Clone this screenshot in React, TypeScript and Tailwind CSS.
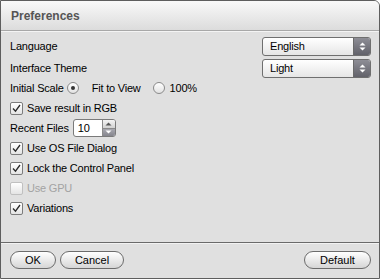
import React from "react";

const font = { fontFamily: '"Liberation Sans", Arial, sans-serif' };

function Arrows({ dark }: { dark?: boolean }) {
  const c = dark ? "#ffffff" : "#555555";
  return (
    <svg width="7" height="9" viewBox="0 0 7 9">
      <path d="M0.5 3.5 L3.5 0.5 L6.5 3.5 Z" fill={c} />
      <path d="M0.5 5.5 L3.5 8.5 L6.5 5.5 Z" fill={c} />
    </svg>
  );
}

function Select({ value }: { value: string }) {
  return (
    <div className="flex h-[19px] w-[109px] overflow-hidden rounded-[3px] border border-[#6f6f6f] bg-gradient-to-b from-white to-[#e6e6e6]">
      <div className="flex flex-1 items-center pl-[7px] text-[11px] text-black">{value}</div>
      <div className="flex w-[17px] items-center justify-center border-l border-[#6a6a6a] bg-gradient-to-b from-[#8e8e96] to-[#62626a]">
        <Arrows dark />
      </div>
    </div>
  );
}

function Checkbox({ label, checked, disabled }: { label: string; checked?: boolean; disabled?: boolean }) {
  return (
    <div className="flex h-[20px] items-center">
      <div
        className={
          "flex h-[13px] w-[13px] items-center justify-center rounded-[2px] border bg-gradient-to-b from-white to-[#e4e4e4] " +
          (disabled ? "border-[#c0c0c0]" : "border-[#7c7c7c]")
        }
      >
        {checked && (
          <svg width="9" height="9" viewBox="0 0 9 9">
            <path d="M1 4.5 L3.5 7.2 L8 1" fill="none" stroke="#2a2a2a" strokeWidth="1.3" />
          </svg>
        )}
      </div>
      <span className={"ml-[4px] text-[11px] tracking-[-0.2px] " + (disabled ? "text-[#a3a3a3]" : "text-black")}>
        {label}
      </span>
    </div>
  );
}

function Radio({ checked }: { checked?: boolean }) {
  return (
    <div className="flex h-[12px] w-[12px] items-center justify-center rounded-full border border-[#8a8a8a] bg-gradient-to-b from-white to-[#e2e2e2]">
      {checked && <div className="h-[4px] w-[4px] rounded-full bg-[#333]" />}
    </div>
  );
}

function Button({ label, w }: { label: string; w: string }) {
  return (
    <div
      className={
        "flex h-[18px] items-center justify-center rounded-full border border-[#6c6c6c] bg-gradient-to-b from-white to-[#d6d6d6] text-[11px] text-black " +
        w
      }
    >
      {label}
    </div>
  );
}

export default function App() {
  return (
    <div className="h-[279px] w-[382px] bg-white" style={font}>
      <div className="flex h-[279px] w-[380px] flex-col overflow-hidden rounded-tr-[6px] border border-[#5e5e5e] bg-[#e0e0e0]">
        {/* title */}
        <div className="flex h-[30px] items-center border-b border-[#a8a8a8] bg-gradient-to-b from-[#f9f9f9] to-[#dcdcdc] pl-[10px] shadow-[0_1px_0_#f4f4f4]">
          <span className="text-[12px] font-bold text-[#555555]">Preferences</span>
        </div>

        {/* settings */}
        <div className="flex flex-1 flex-col pl-[9px] pr-[8px] pt-[5px] text-[11px] tracking-[-0.2px] text-black">
          <div className="flex h-[20px] items-center justify-between">
            <span>Language</span>
            <Select value="English" />
          </div>
          <div className="mt-[2px] flex h-[20px] items-center justify-between">
            <span>Interface Theme</span>
            <Select value="Light" />
          </div>
          <div className="flex h-[20px] items-center">
            <span>Initial Scale</span>
            <div className="ml-[3px]">
              <Radio checked />
            </div>
            <span className="ml-[13px]">Fit to View</span>
            <div className="ml-[12px]">
              <Radio />
            </div>
            <span className="ml-[5px]">100%</span>
          </div>
          <Checkbox label="Save result in RGB" checked />
          <div className="flex h-[20px] items-center">
            <span>Recent Files</span>
            <div className="ml-[4px] flex h-[18px] w-[43px] overflow-hidden rounded-[3px] border border-[#7a7a7a] bg-white">
              <div className="flex flex-1 items-center pl-[4px]">10</div>
              <div className="flex w-[13px] flex-col border-l border-[#8a8a8a]">
                <div className="flex flex-1 items-center justify-center border-b border-[#8a8a8a] bg-gradient-to-b from-[#f4f4f4] to-[#d2d2d2]">
                  <svg width="7" height="4" viewBox="0 0 7 4">
                    <path d="M0.5 3.5 L3.5 0.5 L6.5 3.5 Z" fill="#555" />
                  </svg>
                </div>
                <div className="flex flex-1 items-center justify-center bg-gradient-to-b from-[#a8a8b0] to-[#85858d]">
                  <svg width="7" height="4" viewBox="0 0 7 4">
                    <path d="M0.5 0.5 L3.5 3.5 L6.5 0.5 Z" fill="#fff" />
                  </svg>
                </div>
              </div>
            </div>
          </div>
          <Checkbox label="Use OS File Dialog" checked />
          <Checkbox label="Lock the Control Panel" checked />
          <Checkbox label="Use GPU" disabled />
          <Checkbox label="Variations" checked />
        </div>

        {/* footer */}
        <div className="flex h-[36px] items-start border-t border-[#6a6a6a] pl-[9px] pr-[8px] pt-[8px] shadow-[inset_0_1px_0_#f2f2f2]">
          <Button label="OK" w="w-[46px]" />
          <div className="ml-[4px]">
            <Button label="Cancel" w="w-[64px]" />
          </div>
          <div className="ml-auto">
            <Button label="Default" w="w-[67px]" />
          </div>
        </div>
      </div>
    </div>
  );
}
